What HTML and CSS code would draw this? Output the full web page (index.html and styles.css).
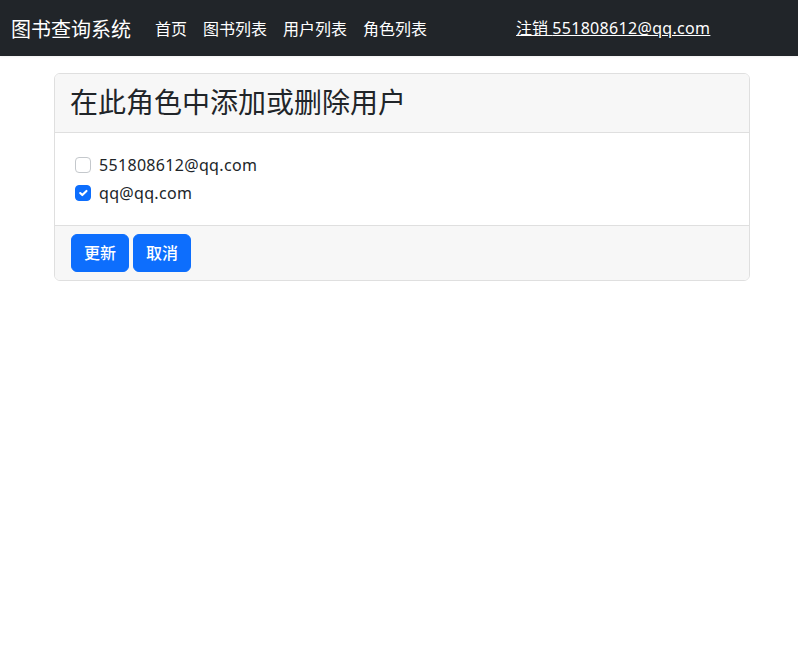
FILE: index.html
```html
<!DOCTYPE html>
<html>
<head>
    <meta charset="utf-8">
    <title>图书查询系统</title>
    <link rel="stylesheet" href="styles.css">
</head>
<body>
    <nav class="navbar">
        <a class="brand" href="#">图书查询系统</a>
        <a class="nav-link" href="#">首页</a>
        <a class="nav-link" href="#">图书列表</a>
        <a class="nav-link" href="#">用户列表</a>
        <a class="nav-link" href="#">角色列表</a>
        <a class="logout" href="#">注销 <span class="latin">551808612@qq.com</span></a>
    </nav>

    <div class="container">
        <form class="card">
            <div class="card-header">
                <h3>在此角色中添加或删除用户</h3>
            </div>
            <div class="card-body">
                <label class="check-row">
                    <input type="checkbox" class="check-input">
                    <span class="latin">551808612@qq.com</span>
                </label>
                <label class="check-row">
                    <input type="checkbox" class="check-input" checked>
                    <span class="latin">qq@qq.com</span>
                </label>
            </div>
            <div class="card-footer">
                <button type="submit" class="btn">更新</button>
                <button type="button" class="btn">取消</button>
            </div>
        </form>
    </div>
</body>
</html>
```

FILE: styles.css
```css
body { margin: 0; font-family: "Noto Sans", "Noto Sans CJK SC", sans-serif; font-size: 16px; color: #212529; background: #fff; }
a { color: #fff; text-decoration: none; }
.latin { letter-spacing: 0.32px; }

.navbar { display: flex; align-items: center; height: 56px; background: #212529; padding: 0 11px; box-shadow: 0 1px 2px rgba(0,0,0,.06); }
.brand { font-size: 20px; margin-right: 24px; }
.nav-link { margin-right: 16px; }
.logout { margin-left: 73px; text-decoration: underline; position: relative; top: -1px; }

.container { padding: 17px 0 0 54px; }
.card { width: 694px; border: 1px solid #dfdfdf; border-radius: 6px; overflow: hidden; }
.card-header { background: #f7f7f7; border-bottom: 1px solid #dfdfdf; padding: 8px 15px 9px; }
.card-header h3 { margin: 0; font-size: 28px; font-weight: 400; line-height: 41px; }
.card-body { padding: 18px 20px; }
.check-row { display: flex; align-items: center; height: 28px; gap: 8px; }
.check-input { appearance: none; -webkit-appearance: none; width: 16px; height: 16px; margin: 0; border: 1px solid #c4c8cc; border-radius: 4px; background: #fff; }
.check-input:checked { background-color: #0d6efd; border-color: #0d6efd; background-image: url("data:image/svg+xml,%3csvg xmlns='http://www.w3.org/2000/svg' viewBox='0 0 20 20'%3e%3cpath fill='none' stroke='%23fff' stroke-linecap='round' stroke-linejoin='round' stroke-width='3' d='m6 10 3 3 6-6'/%3e%3c/svg%3e"); background-size: 100%; }
.card-footer { background: #f7f7f7; border-top: 1px solid #dfdfdf; padding: 8px 16px; display: flex; gap: 4px; }
.btn { font-family: inherit; font-size: 16px; font-weight: 500; line-height: 24px; color: #fff; background: #0d6efd; border: 1px solid #0d6efd; border-radius: 6px; padding: 6px 12px; }
```
